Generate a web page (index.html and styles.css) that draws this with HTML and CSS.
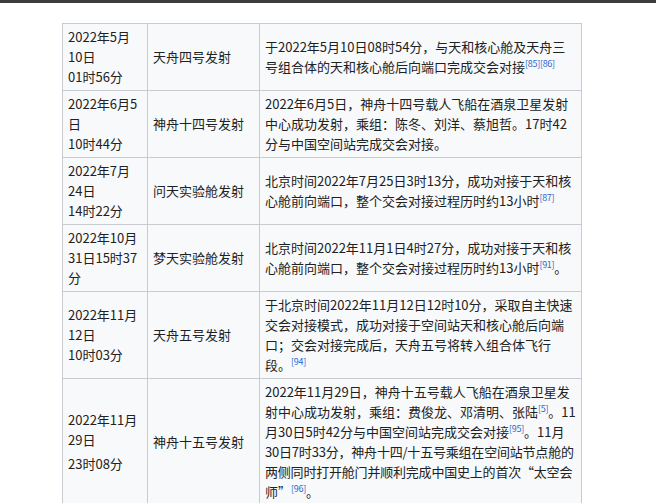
FILE: index.html
```html
<!DOCTYPE html>
<html lang="zh">
<head>
<meta charset="utf-8">
<link rel="stylesheet" href="styles.css">
</head>
<body>
<div class="topbar"></div>
<div class="content">
<table class="wikitable">
<tr>
<td class="date">2022年5月10日<br>01时56分</td>
<td class="event">天舟四号发射</td>
<td class="desc">于2022年5月10日08时54分，与天和核心舱及天舟三号组合体的天和核心舱后向端口完成交会对接<sup><a>[85]</a><a>[86]</a></sup></td>
</tr>
<tr>
<td class="date">2022年6月5日<br>10时44分</td>
<td class="event">神舟十四号发射</td>
<td class="desc">2022年6月5日，神舟十四号载人飞船在酒泉卫星发射中心成功发射，乘组：陈冬、刘洋、蔡旭哲。17时42分与中国空间站完成交会对接。</td>
</tr>
<tr>
<td class="date">2022年7月24日<br>14时22分</td>
<td class="event">问天实验舱发射</td>
<td class="desc">北京时间2022年7月25日3时13分，成功对接于天和核心舱前向端口，整个交会对接过程历时约13小时<sup><a>[87]</a></sup></td>
</tr>
<tr>
<td class="date">2022年10月31日15时37分</td>
<td class="event">梦天实验舱发射</td>
<td class="desc">北京时间2022年11月1日4时27分，成功对接于天和核心舱前向端口，整个交会对接过程历时约13小时<sup><a>[91]</a></sup>。</td>
</tr>
<tr>
<td class="date">2022年11月12日<br>10时03分</td>
<td class="event">天舟五号发射</td>
<td class="desc">于北京时间2022年11月12日12时10分，采取自主快速交会对接模式，成功对接于空间站天和核心舱后向端口；交会对接完成后，天舟五号将转入组合体飞行段。<sup><a>[94]</a></sup></td>
</tr>
<tr>
<td class="date">2022年11月29日<br><span class="time">23时08分</span></td>
<td class="event">神舟十五号发射</td>
<td class="desc">2022年11月29日，神舟十五号载人飞船在酒泉卫星发射中心成功发射，乘组：费俊龙、邓清明、张陆<sup><a>[5]</a></sup>。11月30日5时42分与中国空间站完成交会对接<sup><a>[95]</a></sup>。11月<span class="tight">30日7时33分，神舟十四/十五号乘组在空间站节点舱的两侧同时打开舱门并顺利完成中国史上的首次“太空会</span>师”<sup><a>[96]</a></sup>。</td>
</tr>
</table>
</div>
</body>
</html>
```

FILE: styles.css
```css
html, body {
  margin: 0;
  padding: 0;
  background: #ffffff;
}

body {
  font-family: "Noto Sans CJK SC", "Noto Sans", sans-serif;
  font-size: 13px;
  color: #202122;
  overflow: hidden;
  height: 503px;
}

.topbar {
  height: 3px;
  background: #3c3c3c;
}

.content {
  padding: 20px 0 0 62px;
}

.wikitable {
  border-collapse: collapse;
  background: #f8f9fa;
  border: 1px solid #c8ccd1;
}

.wikitable td {
  border: 1px solid #c8ccd1;
  padding: 3px 5px 3px 5px;
  line-height: 20px;
  vertical-align: middle;
}

.date {
  width: 74px;
}

.event {
  width: 101px;
}

.desc {
  width: 311px;
}

.tight {
  letter-spacing: -0.2px;
}

.time {
  display: inline-block;
  margin-top: 4px;
}

sup {
  font-size: 9px;
  line-height: 1;
  letter-spacing: -0.3px;
  vertical-align: super;
}

sup a {
  color: #3366cc;
}
```
